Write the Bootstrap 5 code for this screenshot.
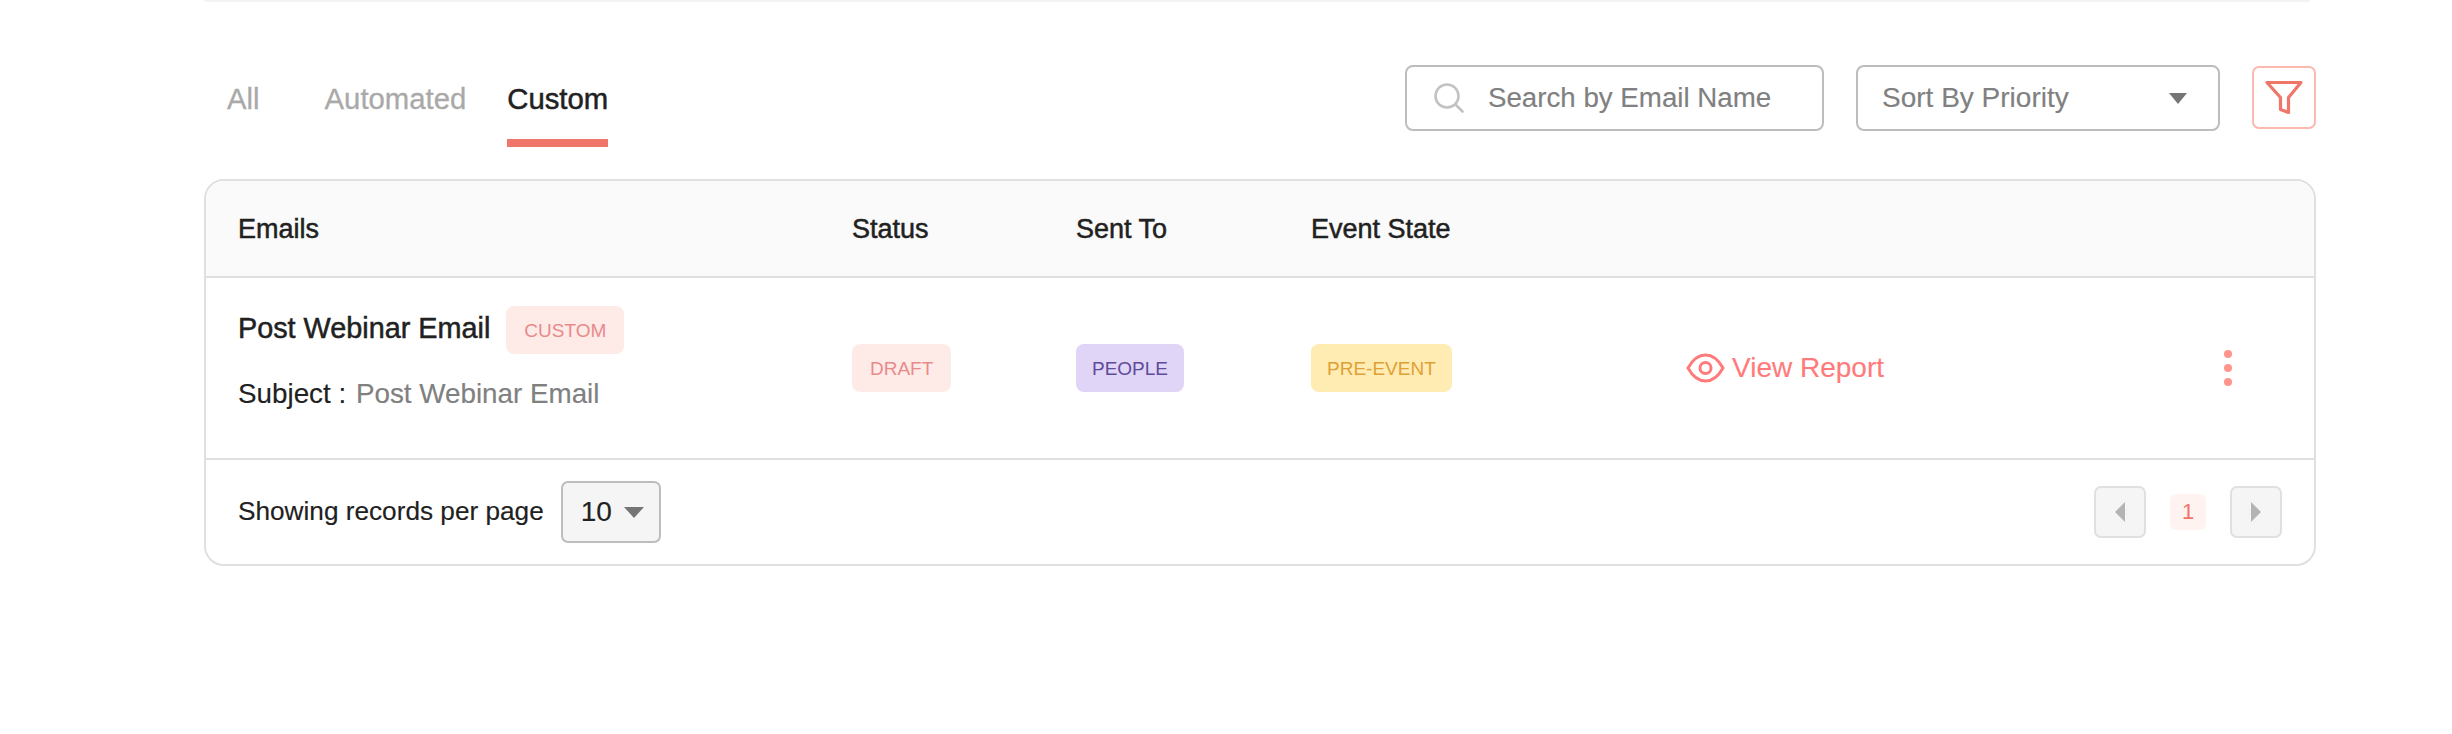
<!DOCTYPE html>
<html lang="en">
<head>
    <meta charset="UTF-8">
    <meta name="viewport" content="width=device-width, initial-scale=1.0">
    <title>Emails</title>
    <link href="https://cdn.jsdelivr.net/npm/bootstrap@5.3.0/dist/css/bootstrap.min.css" rel="stylesheet">
    <style>
        body { font-family: "Liberation Sans", Arial, sans-serif; color: #212121; background: #fff; padding: 0 136px 0 204px; -webkit-text-stroke: .15px currentColor; }
        .top-rule { height: 2px; background: #f3f3f3; border-radius: 0 0 4px 4px; margin-right: 6px; }
        .strong-text { -webkit-text-stroke: .5px currentColor; }

        .toolbar { height: 177px; padding-top: 63px; }
        .tab-nav { padding-left: 23px; gap: 41px; }
        .tab-nav .nav-link { padding: 17px 0 0; height: 82px; font-size: 29.3px; line-height: 34px; color: #a9a9a9; background: none; border: 0; border-radius: 0; -webkit-text-stroke: .3px currentColor; }
        .tab-nav .nav-link:first-child { margin-right: 24px; }
        .tab-nav .nav-link.active { color: #212121; border-bottom: 8px solid #ef7668; -webkit-text-stroke: .5px currentColor; }

        .search-box { width: 419px; height: 66px; border: 2px solid #bdbdbd; border-radius: 8px; padding-left: 27px; gap: 24px; }
        .search-box input { border: 0; padding: 0; width: 320px; font-size: 27.7px; color: #757575; box-shadow: none; background: transparent; }
        .search-box input::placeholder { color: #808080; opacity: 1; }
        .sort-select { width: 364px; height: 66px; margin-left: 32px; border: 2px solid #bdbdbd; border-radius: 8px; padding: 0 0 0 24px; font-size: 28px; color: #808080;
            background-image: url("data:image/svg+xml,%3Csvg xmlns='http://www.w3.org/2000/svg' width='18' height='11'%3E%3Cpath d='M0 0h18l-9 11z' fill='%23757575'/%3E%3C/svg%3E");
            background-size: 18px 11px; background-position: right 31px center; }
        .filter-btn { width: 64px; height: 63px; margin-left: 32px; margin-top: 1px; border: 2px solid #fbb9b0; border-radius: 7px; padding: 0; background: #fff; }

        .email-panel { border: 2px solid #e0e0e0; border-radius: 20px; overflow: hidden; }
        .email-table { table-layout: fixed; width: 100%; margin: 0; }
        .email-table > :not(caption) > * > * { padding: 0; border-bottom: 0; box-shadow: none; vertical-align: middle; color: #212121; font-size: 27px; }
        .email-table thead th { height: 96px; padding-top: 2px; background: #fafafa; font-weight: 400; border-bottom: 2px solid #e0e0e0; }
        .email-table tbody td { height: 182px; border-bottom: 2px solid #e0e0e0; }
        .email-table .first-cell { padding-left: 32px; }
        .col-email { width: 646px; }
        .col-status { width: 224px; }
        .col-sent { width: 235px; }
        .col-state { width: 375px; }
        .col-report { width: 539px; }

        .email-name { font-size: 28.8px; line-height: 48px; gap: 16px; margin-top: -22px; }
        .email-name .strong-text { margin-bottom: 5px; }
        .email-subject { font-size: 27.8px; line-height: 34px; margin-top: 20px; }
        .email-subject span { color: #808080; margin-left: 2px; }
        .tag { display: inline-block; height: 48px; line-height: 49px; padding: 0 16px; font-size: 19px; border-radius: 8px; -webkit-text-stroke: 0; }
        .tag-red { background: #feebe8; color: #e88a8a; padding: 0 18px; }
        .tag-purple { background: #e0d4f7; color: #5f4b9a; }
        .tag-yellow { background: #ffecb3; color: #dfa035; }
        .report-link { color: #ff7b7b; font-size: 28px; text-decoration: none; gap: 7px; }
        .more-dots { gap: 6px; width: 8px; margin-left: -1px; }
        .more-dots i { display: block; width: 8px; height: 8px; border-radius: 50%; background: #ff948a; }

        .panel-foot { height: 104px; padding: 0 32px; }
        .per-page { font-size: 26.2px; }
        .page-select { width: 100px; height: 62px; margin-left: 17px; border: 2px solid #bdbdbd; border-radius: 7px; background-color: #f5f5f5; padding: 0 0 0 18px; font-size: 28px; color: #212121;
            background-image: url("data:image/svg+xml,%3Csvg xmlns='http://www.w3.org/2000/svg' width='20' height='11'%3E%3Cpath d='M0 0h20l-10 11z' fill='%23757575'/%3E%3C/svg%3E");
            background-size: 20px 11px; background-position: right 15px center; }
        .pager { gap: 24px; }
        .pager-arrow { width: 52px; height: 52px; border: 2px solid #e0e0e0; border-radius: 7px; background: #f5f5f5; padding: 0; }
        .pager-num { width: 36px; height: 36px; line-height: 36px; text-align: center; border-radius: 6px; background: #fef3f1; color: #ef7668; font-size: 22px; -webkit-text-stroke: 0; }
    </style>
</head>
<body>
    <div class="top-rule"></div>

    <div class="toolbar d-flex justify-content-between align-items-start">
        <nav class="nav tab-nav">
            <a class="nav-link" href="#">All</a>
            <a class="nav-link" href="#">Automated</a>
            <a class="nav-link active" href="#">Custom</a>
        </nav>
        <div class="d-flex align-items-start">
            <label class="search-box d-flex align-items-center mb-0">
                <svg width="30" height="30" viewBox="0 0 30 30" fill="none" stroke="#c2c2c2" stroke-width="2.6" stroke-linecap="round"><circle cx="13" cy="13" r="11.5"/><path d="M21.5 21.5l7 7"/></svg>
                <input class="form-control" type="text" placeholder="Search by Email Name">
            </label>
            <select class="form-select sort-select">
                <option>Sort By Priority</option>
            </select>
            <button class="btn filter-btn d-flex align-items-center justify-content-center" type="button" aria-label="Filter">
                <svg width="38" height="35" viewBox="0 0 38 35" fill="none" stroke="#ef7668" stroke-width="3.2" stroke-linejoin="round"><path d="M2 2.5h34L23.5 17.5v15l-8-3V17.5z"/></svg>
            </button>
        </div>
    </div>

    <div class="email-panel">
        <table class="table email-table">
            <colgroup>
                <col class="col-email"><col class="col-status"><col class="col-sent"><col class="col-state"><col class="col-report"><col>
            </colgroup>
            <thead>
                <tr>
                    <th class="first-cell strong-text">Emails</th>
                    <th class="strong-text">Status</th>
                    <th class="strong-text">Sent To</th>
                    <th class="strong-text">Event State</th>
                    <th></th>
                    <th></th>
                </tr>
            </thead>
            <tbody>
                <tr>
                    <td class="first-cell">
                        <div class="email-name d-flex align-items-center">
                            <span class="strong-text">Post Webinar Email</span>
                            <span class="tag tag-red">CUSTOM</span>
                        </div>
                        <div class="email-subject">Subject : <span>Post Webinar Email</span></div>
                    </td>
                    <td><span class="tag tag-red">DRAFT</span></td>
                    <td><span class="tag tag-purple">PEOPLE</span></td>
                    <td><span class="tag tag-yellow">PRE-EVENT</span></td>
                    <td>
                        <a class="report-link d-flex align-items-center" href="#">
                            <svg width="39" height="30" viewBox="0 0 39 30" fill="none" stroke="#ff7b7b" stroke-width="3"><path d="M2 15C7 6 13 2 19.5 2S32 6 37 15c-5 9-11 13-17.5 13S7 24 2 15z"/><circle cx="19.5" cy="15" r="5.5"/></svg>
                            View Report
                        </a>
                    </td>
                    <td><div class="more-dots d-flex flex-column"><i></i><i></i><i></i></div></td>
                </tr>
            </tbody>
        </table>
        <div class="panel-foot d-flex justify-content-between align-items-center">
            <div class="per-page d-flex align-items-center">
                Showing records per page
                <select class="form-select page-select"><option>10</option></select>
            </div>
            <div class="pager d-flex align-items-center">
                <button class="pager-arrow d-flex align-items-center justify-content-center" type="button" aria-label="Previous">
                    <svg width="10" height="20" viewBox="0 0 10 20"><path d="M10 0v20L0 10z" fill="#b4b4b4"/></svg>
                </button>
                <span class="pager-num">1</span>
                <button class="pager-arrow d-flex align-items-center justify-content-center" type="button" aria-label="Next">
                    <svg width="10" height="20" viewBox="0 0 10 20"><path d="M0 0v20l10-10z" fill="#b4b4b4"/></svg>
                </button>
            </div>
        </div>
    </div>

    <script src="https://cdn.jsdelivr.net/npm/bootstrap@5.3.0/dist/js/bootstrap.bundle.min.js"></script>
</body>
</html>
